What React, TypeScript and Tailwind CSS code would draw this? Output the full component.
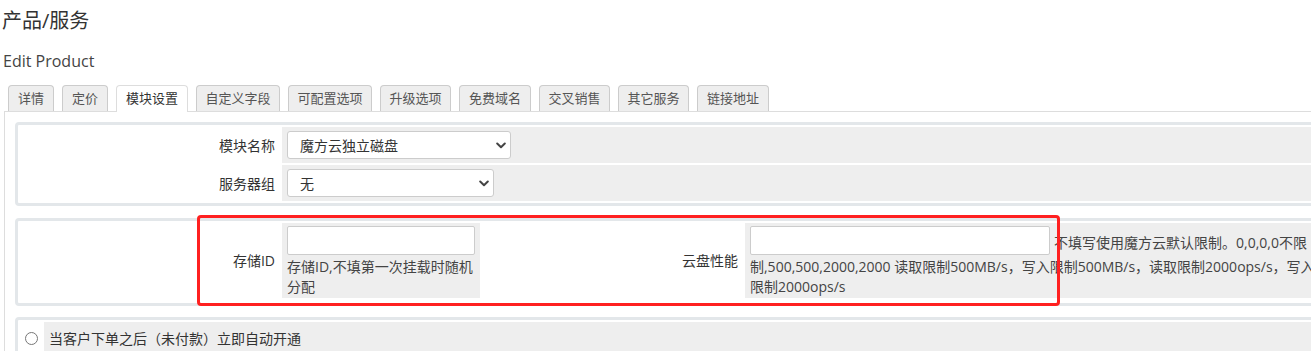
import React from "react";

const tabs: [string, number][] = [
  ["详情", 46],
  ["定价", 46],
  ["模块设置", 72],
  ["自定义字段", 84],
  ["可配置选项", 84],
  ["升级选项", 71],
  ["免费域名", 72],
  ["交叉销售", 71],
  ["其它服务", 71],
  ["链接地址", 72],
];

function Chevron() {
  return (
    <svg width="10" height="7" viewBox="0 0 10 7" className="shrink-0">
      <path d="M1.2 1.5 L5 5.2 L8.8 1.5" fill="none" stroke="#444" strokeWidth="2" strokeLinecap="round" strokeLinejoin="round" />
    </svg>
  );
}

function FakeSelect({ width, text }: { width: string; text: string }) {
  return (
    <div className={`${width} h-[28px] border border-[#ccc] rounded-[3px] bg-white flex items-center justify-between pl-[12px] pr-[4px] text-[14px] text-[#333]`}>
      <span>{text}</span>
      <Chevron />
    </div>
  );
}

export default function App() {
  return (
    <div className="relative w-[1311px] h-[351px] overflow-hidden bg-white text-[#333] font-['Open_Sans','Noto_Sans_CJK_SC',sans-serif]">
      <div className="w-[1345px]">
        <div className="h-[42px] flex items-center pl-[2px] text-[20px] leading-none text-[#333]">产品/服务</div>
        <div className="h-[38px] flex items-center pl-[3px] text-[16px] leading-none text-[#444]">Edit Product</div>
        <div className="ml-[4px] mt-[5px] h-[27px] flex items-end gap-[8px] pl-[4px] border-b border-[#ddd]">
          {tabs.map(([t, w], i) =>
            i === 2 ? (
              <div
                key={t}
                style={{ width: w }}
                className="h-[27px] -mb-px flex items-center justify-center bg-white border border-[#ddd] border-b-0 rounded-t-[4px] text-[13px] text-[#333]"
              >
                {t}
              </div>
            ) : (
              <div
                key={t}
                style={{ width: w }}
                className="h-[26px] flex items-center justify-center bg-[#eee] border border-[#ccc] border-b-0 rounded-t-[4px] text-[13px] text-[#555]"
              >
                {t}
              </div>
            )
          )}
        </div>
        <div className="ml-[4px] border-l border-[#ddd] pl-[10px] pr-[10px] pt-[10px]">
          {/* Panel 1 */}
          <div className="border-[3px] border-[#e3e7ea] rounded-[4px] p-[2px] mb-[12px] flex flex-col gap-[2px]">
            <div className="flex gap-[2px] h-[36px]">
              <div className="w-[260px] shrink-0 flex items-center justify-end pr-[5px] text-[14px]">模块名称</div>
              <div className="flex-1 bg-[#eee] px-[5px] flex items-center">
                <FakeSelect width="w-[224px]" text="魔方云独立磁盘" />
              </div>
            </div>
            <div className="flex gap-[2px] h-[36px]">
              <div className="w-[260px] shrink-0 flex items-center justify-end pr-[5px] text-[14px]">服务器组</div>
              <div className="flex-1 bg-[#eee] px-[5px] flex items-center">
                <FakeSelect width="w-[207px]" text="无" />
              </div>
            </div>
          </div>
          {/* Panel 2 */}
          <div className="border-[3px] border-[#e3e7ea] rounded-[4px] p-[2px] pb-[5px] mb-[11px]">
            <div className="flex gap-[2px] h-[75px]">
              <div className="w-[260px] shrink-0 flex items-center justify-end pr-[5px] text-[14px]">存储ID</div>
              <div className="w-[198px] shrink-0 bg-[#eee] px-[5px] pt-[3px] text-[14px]">
                <div className="w-[188px] h-[29px] border border-[#ccc] rounded-[2px] bg-white" />
                <div className="mt-[2px] leading-[20px] whitespace-nowrap text-[#444]">
                  存储ID,不填第一次挂载时随机
                  <br />
                  分配
                </div>
              </div>
              <div className="w-[261px] shrink-0 flex items-center justify-end pr-[5px] text-[14px]">云盘性能</div>
              <div className="flex-1 bg-[#eee] px-[5px] pt-[3px] text-[14px] text-[#444] whitespace-nowrap overflow-hidden">
                <div className="flex items-center">
                  <div className="w-[300px] h-[29px] shrink-0 border border-[#ccc] rounded-[2px] bg-white" />
                  <span className="ml-[4px] mt-[4px] leading-[20px]">不填写使用魔方云默认限制。0,0,0,0不限</span>
                </div>
                <div className="mt-[2px] leading-[20px]">
                  制,500,500,2000,2000 读取限制500MB/s，写入限制500MB/s，读取限制2000ops/s，写入
                  <br />
                  限制2000ops/s
                </div>
              </div>
            </div>
          </div>
          {/* Panel 3 */}
          <div className="border-[3px] border-[#e3e7ea] rounded-[4px] p-[2px]">
            <div className="flex gap-[2px] h-[32px]">
              <div className="w-[22px] shrink-0 flex items-center justify-center">
                <div className="w-[13px] h-[13px] rounded-full border border-[#777] bg-white" />
              </div>
              <div className="flex-1 bg-[#eee] pl-[5px] flex items-center text-[14px]">当客户下单之后（未付款）立即自动开通</div>
            </div>
          </div>
        </div>
      </div>
      <div className="absolute left-[197px] top-[215px] w-[863px] h-[91px] border-[3px] border-[#ff2020] rounded-[4px] pointer-events-none" />
    </div>
  );
}
